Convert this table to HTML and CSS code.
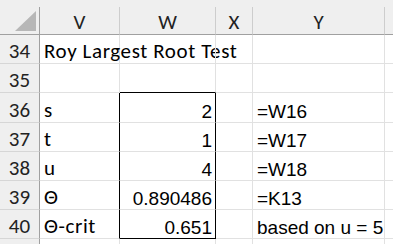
FILE: index.html
```html
<!DOCTYPE html>
<html>
<head>
<meta charset="utf-8">
<link rel="stylesheet" href="styles.css">
</head>
<body>
<div class="sheet">
  <div class="strip"></div>
  <div class="hd corner"><svg class="tri" width="39" height="27" viewBox="0 0 39 27"><polygon points="36,4 36,24 15,24" fill="#b7b7b7"/></svg></div>
  <div class="hd col">V</div>
  <div class="hd col">W</div>
  <div class="hd col">X</div>
  <div class="hd col">Y</div>
  <div class="hd col"></div>

  <div class="rh">34</div>
  <div class="c cal">Roy Largest Root Test</div>
  <div class="c"></div><div class="c"></div><div class="c"></div><div class="c"></div>

  <div class="rh">35</div>
  <div class="c"></div>
  <div class="c box-top"></div>
  <div class="c"></div><div class="c"></div><div class="c"></div>

  <div class="rh">36</div>
  <div class="c cal box-left">s</div>
  <div class="c num box-right">2</div>
  <div class="c"></div>
  <div class="c ar">=W16</div>
  <div class="c"></div>

  <div class="rh">37</div>
  <div class="c cal box-left">t</div>
  <div class="c num box-right">1</div>
  <div class="c"></div>
  <div class="c ar">=W17</div>
  <div class="c"></div>

  <div class="rh">38</div>
  <div class="c cal box-left">u</div>
  <div class="c num box-right">4</div>
  <div class="c"></div>
  <div class="c ar">=W18</div>
  <div class="c"></div>

  <div class="rh">39</div>
  <div class="c cal box-left">Θ</div>
  <div class="c num box-right">0.890486</div>
  <div class="c"></div>
  <div class="c ar">=K13</div>
  <div class="c"></div>

  <div class="rh">40</div>
  <div class="c cal box-left">Θ-crit</div>
  <div class="c num box-right box-bottom">0.651</div>
  <div class="c"></div>
  <div class="c ar">based on u = 5</div>
  <div class="c"></div>

  <div class="rh"></div>
  <div class="c"></div><div class="c"></div><div class="c"></div><div class="c"></div><div class="c"></div>
</div>
</body>
</html>
```
FILE: styles.css
```css
html, body {
  margin: 0;
  padding: 0;
  background: #ffffff;
  overflow: hidden;
}
.sheet {
  width: 393px;
  height: 244px;
  overflow: hidden;
  display: grid;
  grid-template-columns: 40px 80px 96px 37px 132px 40px;
  grid-template-rows: 7px 28px 29px 29px 30px 29px 29px 29px 29px 29px;
  font-family: Carlito, Lato, "Liberation Sans", sans-serif;
  color: #000;
}
.strip {
  grid-column: 1 / -1;
  background: #efefef;
}
.hd {
  box-sizing: border-box;
  background: #efefef;
  border-right: 1px solid #cdcdcd;
  border-bottom: 1px solid #a0a0a0;
  font-size: 21px;
  display: flex;
  align-items: flex-end;
  justify-content: center;
  line-height: 1;
  padding-bottom: 1px;
  color: #222;
}
.corner {
  padding: 0;
  border-right-color: #a0a0a0;
  display: block;
}
.tri {
  display: block;
}
.rh {
  box-sizing: border-box;
  background: #efefef;
  border-right: 1px solid #a0a0a0;
  border-bottom: 1px solid #d6d6d6;
  font-size: 21px;
  line-height: 1;
  display: flex;
  align-items: flex-end;
  justify-content: center;
  padding-bottom: 1px;
  color: #222;
}
.c {
  box-sizing: border-box;
  border-right: 1px solid #e1e1e1;
  border-bottom: 1px solid #e1e1e1;
  display: flex;
  align-items: flex-end;
  line-height: 1;
  padding-bottom: 1px;
  white-space: nowrap;
}
.cal {
  font-family: Carlito, Lato, "Liberation Sans", sans-serif;
  font-size: 21px;
  letter-spacing: 0.6px;
  padding-left: 4px;
  padding-bottom: 1px;
}
.num {
  font-family: "Liberation Sans", Arial, sans-serif;
  font-size: 19px;
  justify-content: flex-end;
  padding-right: 3px;
}
.ar {
  font-family: "Liberation Sans", Arial, sans-serif;
  font-size: 19px;
  padding-left: 4px;
}
.box-top {
  border-bottom-color: #000;
}
.box-left {
  border-right-color: #000;
}
.box-right {
  border-right-color: #000;
}
.box-bottom {
  border-bottom-color: #000;
}
```
